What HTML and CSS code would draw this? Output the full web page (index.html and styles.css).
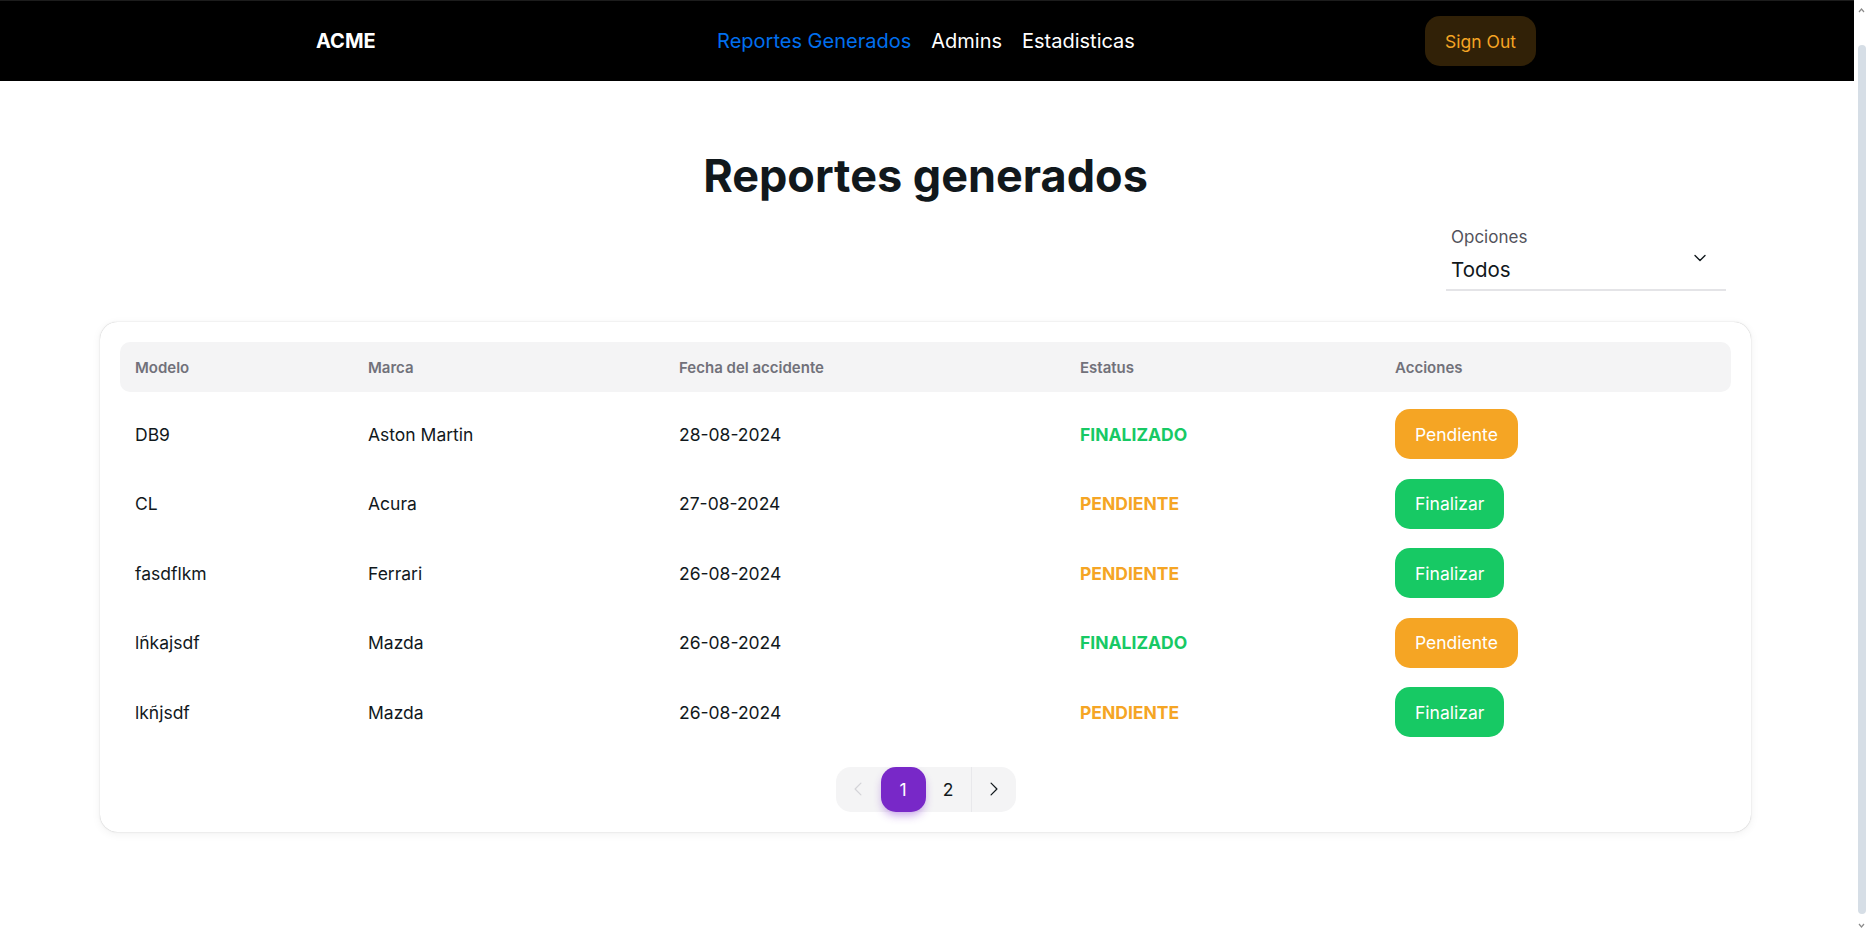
FILE: index.html
```html
<!DOCTYPE html>
<html lang="es">
<head>
<meta charset="utf-8">
<title>Reportes generados</title>
<link rel="stylesheet" href="styles.css">
</head>
<body>
<div class="app">
  <header class="navbar">
    <div class="nav-inner">
      <div class="brand">ACME</div>
      <nav class="nav-links">
        <a class="nav-link active" href="#">Reportes Generados</a>
        <a class="nav-link" href="#">Admins</a>
        <a class="nav-link" href="#">Estadisticas</a>
      </nav>
      <div class="nav-end">
        <button class="signout">Sign Out</button>
      </div>
    </div>
  </header>

  <main class="page">
    <h1 class="title">Reportes generados</h1>

    <div class="filter-row">
      <div class="select">
        <div class="select-text">
          <span class="select-label">Opciones</span>
          <span class="select-value">Todos</span>
        </div>
        <svg class="select-chevron" width="12" height="8" viewBox="0 0 12 8" fill="none">
          <path d="M1 1.5l5 5 5-5" stroke="#11181c" stroke-width="1.4" stroke-linecap="round" stroke-linejoin="round"/>
        </svg>
      </div>
    </div>

    <section class="card">
      <table class="table">
        <colgroup>
          <col class="c1"><col class="c2"><col class="c3"><col class="c4"><col class="c5">
        </colgroup>
        <thead>
          <tr>
            <th>Modelo</th>
            <th>Marca</th>
            <th>Fecha del accidente</th>
            <th>Estatus</th>
            <th>Acciones</th>
          </tr>
        </thead>
        <tbody>
          <tr>
            <td>DB9</td><td>Aston Martin</td><td>28-08-2024</td>
            <td class="status done">FINALIZADO</td>
            <td><button class="btn btn-warn">Pendiente</button></td>
          </tr>
          <tr>
            <td>CL</td><td>Acura</td><td>27-08-2024</td>
            <td class="status pending">PENDIENTE</td>
            <td><button class="btn btn-ok">Finalizar</button></td>
          </tr>
          <tr>
            <td>fasdflkm</td><td>Ferrari</td><td>26-08-2024</td>
            <td class="status pending">PENDIENTE</td>
            <td><button class="btn btn-ok">Finalizar</button></td>
          </tr>
          <tr>
            <td>lñkajsdf</td><td>Mazda</td><td>26-08-2024</td>
            <td class="status done">FINALIZADO</td>
            <td><button class="btn btn-warn">Pendiente</button></td>
          </tr>
          <tr>
            <td>lkñjsdf</td><td>Mazda</td><td>26-08-2024</td>
            <td class="status pending">PENDIENTE</td>
            <td><button class="btn btn-ok">Finalizar</button></td>
          </tr>
        </tbody>
      </table>

      <div class="pagination">
        <div class="pager">
          <span class="pg-item pg-prev">
            <svg width="20" height="20" viewBox="0 0 24 24" fill="none"><path d="M15.5 19l-7-7 7-7" stroke="currentColor" stroke-width="1.5" stroke-linecap="round" stroke-linejoin="round"/></svg>
          </span>
          <span class="pg-item pg-active">1</span>
          <span class="pg-item">2</span>
          <span class="pg-item pg-next">
            <svg width="20" height="20" viewBox="0 0 24 24" fill="none"><path d="M8.5 5l7 7-7 7" stroke="currentColor" stroke-width="1.5" stroke-linecap="round" stroke-linejoin="round"/></svg>
          </span>
        </div>
      </div>
    </section>
  </main>
</div>

<div class="scrollbar" aria-hidden="true">
  <svg class="sb-arrow" width="15" height="20" viewBox="0 0 15 20" fill="none"><path d="M5 12l2.5-3 2.5 3" stroke="#8c8c8c" stroke-width="1.2"/></svg>
  <div class="sb-thumb"></div>
  <svg class="sb-arrow" width="15" height="14" viewBox="0 0 15 14" fill="none"><path d="M5 6l2.5 3 2.5-3" stroke="#8c8c8c" stroke-width="1.2"/></svg>
</div>
</body>
</html>
```

FILE: styles.css
```css
body {
  margin: 0;
  height: 932px;
  overflow: hidden;
  display: flex;
  font-family: Inter, "Noto Sans", sans-serif;
  color: #11181c;
  background: #ffffff;
}

.app {
  flex: 1 1 0;
  min-width: 0;
}

/* Fake browser scrollbar (part of the screenshot) */
.scrollbar {
  width: 15px;
  height: 932px;
  flex: none;
  display: flex;
  flex-direction: column;
  align-items: center;
  background: #ffffff;
}

.sb-thumb {
  flex: 1 1 0;
  width: 8px;
  margin: 25px 0 4px;
  border-radius: 4px;
  background: #d6dee6;
}

/* Navbar */
.navbar {
  height: 81px;
  background: #000000;
  border-top: 1px solid #1c1c1c;
  box-sizing: border-box;
  display: flex;
  align-items: center;
}

.nav-inner {
  width: 1280px;
  margin: 0 auto;
  padding: 0 31px 0 29px;
  box-sizing: border-box;
  display: flex;
  align-items: center;
  gap: 20px;
}

.brand {
  flex: 1 1 0;
  color: #ffffff;
  font-weight: 700;
  font-size: 20px;
}

.nav-links {
  display: flex;
  align-items: center;
  gap: 20px;
}

.nav-link {
  color: #ffffff;
  text-decoration: none;
  font-size: 20px;
  line-height: 28px;
}

.nav-link.active {
  color: #006fee;
}

.nav-end {
  flex: 1 1 0;
  display: flex;
  justify-content: flex-end;
}

.signout {
  height: 50px;
  padding: 0 20px;
  border: none;
  border-radius: 15px;
  background: rgba(245, 165, 36, 0.2);
  color: #f5a524;
  font-family: inherit;
  font-size: 17.5px;
}

/* Page */
.page {
  padding: 68px 103px 0 100px;
}

.title {
  margin: 0;
  text-align: center;
  font-size: 45px;
  line-height: 54px;
  font-weight: 700;
  color: #11181c;
}

.filter-row {
  display: flex;
  justify-content: flex-end;
  margin-top: 8px;
  padding-right: 25px;
}

.select {
  width: 280px;
  height: 80px;
  box-sizing: border-box;
  border-bottom: 2.5px solid #e4e4e7;
  padding: 15px 20px 0 5px;
  display: flex;
  align-items: flex-start;
  justify-content: space-between;
}

.select-text {
  display: flex;
  flex-direction: column;
}

.select-label {
  font-size: 17px;
  line-height: 22px;
  color: #52525b;
}

.select-value {
  margin-top: 8px;
  font-size: 20.5px;
  line-height: 28px;
  color: #11181c;
}

.select-chevron {
  margin-top: 28px;
}

/* Card + table */
.card {
  margin-top: 31px;
  padding: 20px;
  border-radius: 17.5px;
  background: #ffffff;
  box-shadow: 0 0 5px 0 rgba(0, 0, 0, 0.02), 0 2px 10px 0 rgba(0, 0, 0, 0.06), 0 0 1px 0 rgba(0, 0, 0, 0.3);
}

.table {
  width: 100%;
  table-layout: fixed;
  border-collapse: separate;
  border-spacing: 0;
}

.c1 { width: 233px; }
.c2 { width: 311px; }
.c3 { width: 401px; }
.c4 { width: 315px; }

.table th {
  height: 50px;
  padding: 0 15px;
  background: #f4f4f5;
  color: #71717a;
  font-size: 15px;
  font-weight: 600;
  text-align: left;
  white-space: nowrap;
}

.table th:first-child {
  border-radius: 10px 0 0 10px;
}

.table th:last-child {
  border-radius: 0 10px 10px 0;
}

.table td {
  height: 50px;
  padding: 10px 15px 9.5px;
  font-size: 17.5px;
  color: #11181c;
  vertical-align: middle;
  white-space: nowrap;
}

.table tbody tr:first-child td {
  padding-top: 17px;
}

.status {
  font-weight: 700;
}

.status.done {
  color: #17c964;
}

.status.pending {
  color: #f5a524;
}

.btn {
  height: 50px;
  padding: 0 20px;
  border: none;
  border-radius: 15px;
  color: #ffffff;
  font-family: inherit;
  font-size: 17.5px;
}

.btn-warn {
  background: #f5a524;
}

.btn-ok {
  background: #17c964;
}

/* Pagination */
.pagination {
  margin-top: 20px;
  display: flex;
  justify-content: center;
}

.pager {
  display: flex;
  background: #f4f4f5;
  border-radius: 15px;
}

.pg-item {
  width: 45px;
  height: 45px;
  box-sizing: border-box;
  display: flex;
  align-items: center;
  justify-content: center;
  font-size: 17.5px;
  color: #11181c;
}

.pg-prev {
  color: #d4d4d8;
}

.pg-next {
  border-left: 1px solid #e8e8eb;
  color: #11181c;
}

.pg-active {
  background: #7828c8;
  color: #ffffff;
  border-radius: 15px;
  box-shadow: 0 5px 10px -2px rgba(120, 40, 200, 0.45);
}
```
